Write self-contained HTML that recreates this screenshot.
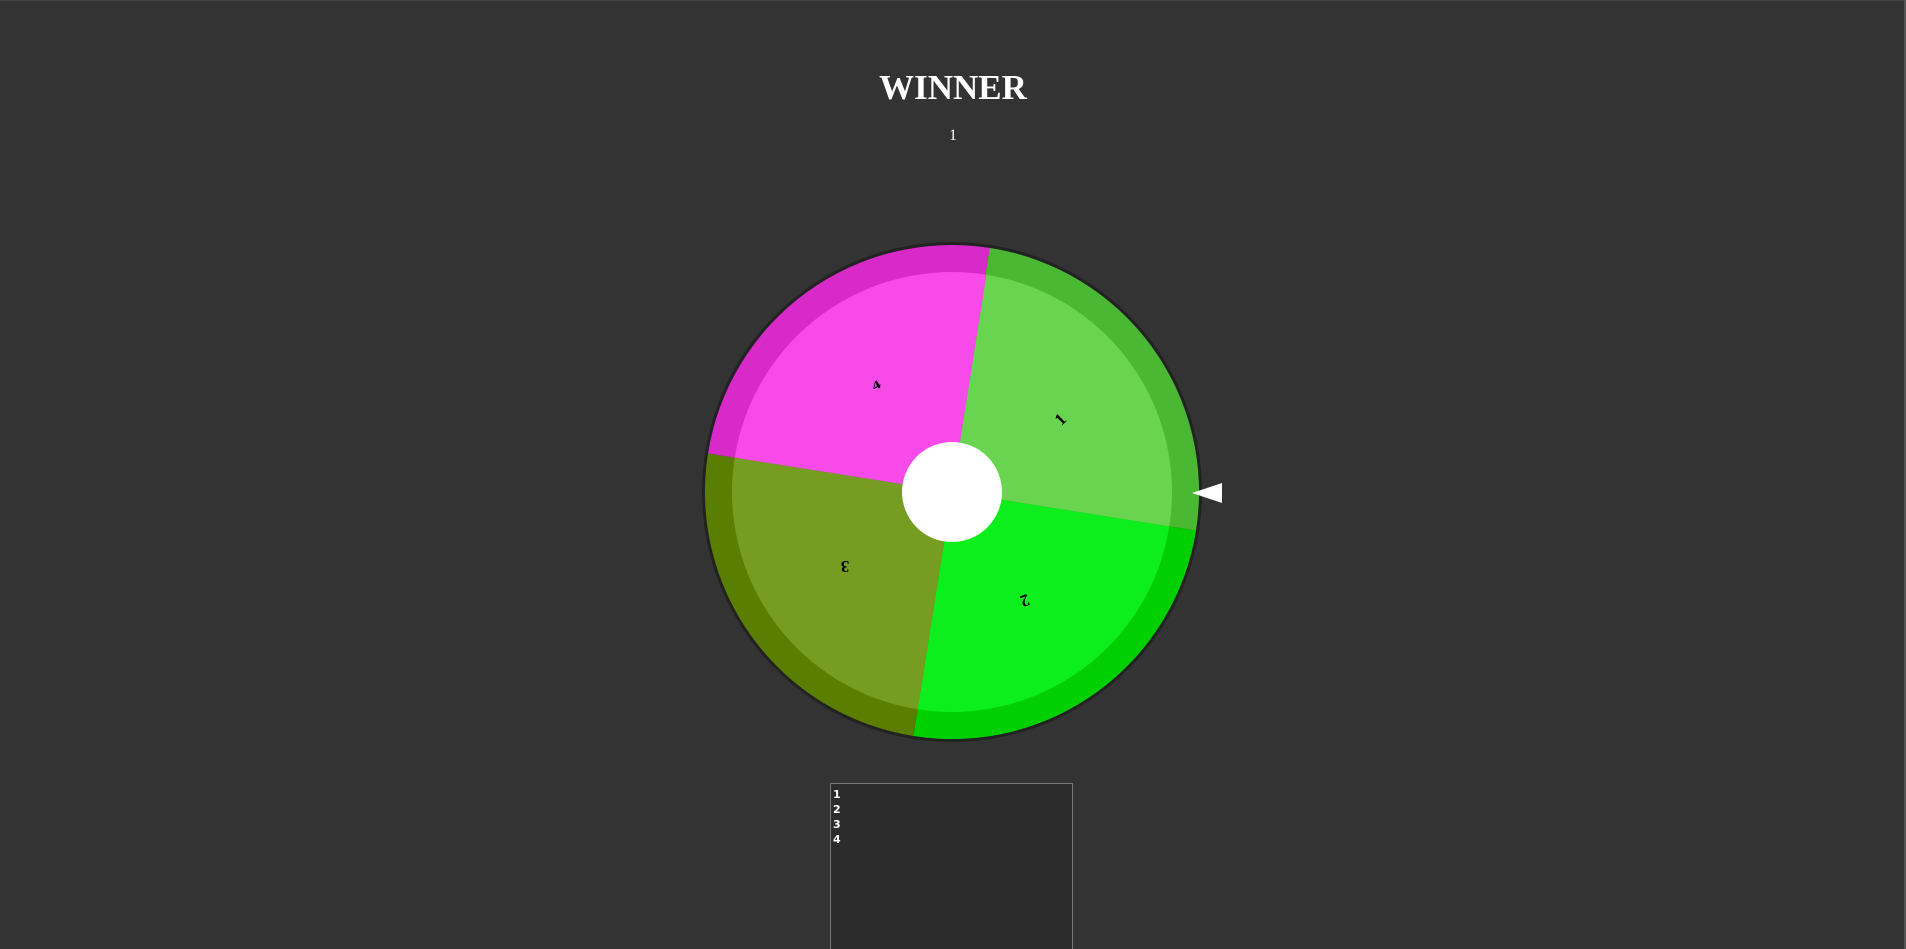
<!DOCTYPE html>
<html><head><meta charset="utf-8"><style>
html,body{margin:0;padding:0;width:1906px;height:949px;overflow:hidden;background:#333;}
body{position:relative;font-family:"Liberation Serif",serif;}
.top{position:absolute;left:0;top:0;width:1906px;height:1px;background:#444;}
.sb{position:absolute;left:1904px;top:0;width:2px;height:949px;background:#555;}
h1{position:absolute;left:0;width:1906px;top:70px;margin:0;text-align:center;color:#fff;font-size:35px;font-weight:bold;line-height:36px;}
.w{position:absolute;left:0;width:1906px;top:127px;text-align:center;color:#fff;font-size:16px;}
.ta{position:absolute;left:830px;top:783px;width:243px;height:180px;border:1px solid #777;background:#2c2c2c;box-sizing:border-box;padding:3px 2px;color:#fff;font:bold 11px/15px "DejaVu Sans",sans-serif;}
</style></head><body>
<div class="top"></div><div class="sb"></div>
<h1>WINNER</h1>
<div class="w">1</div>
<svg width="1906" height="949" style="position:absolute;left:0;top:0">
<g transform="translate(952,492)">
<circle r="250" fill="#222"/>
<path d="M0 0 L37.6 -244.1 A247 247 0 0 1 244 38.6 Z" fill="#4ab832"/>
<path d="M0 0 L244 38.6 A247 247 0 0 1 -38.6 244 Z" fill="#00d000"/>
<path d="M0 0 L-38.6 244 A247 247 0 0 1 -244 -38.6 Z" fill="#5a7e00"/>
<path d="M0 0 L-244 -38.6 A247 247 0 0 1 37.6 -244.1 Z" fill="#d82ac8"/>
<path d="M0 0 L34.4 -217.3 A220 220 0 0 1 217.3 34.4 Z" fill="#68d450"/>
<path d="M0 0 L217.3 34.4 A220 220 0 0 1 -34.4 217.3 Z" fill="#0def1d"/>
<path d="M0 0 L-34.4 217.3 A220 220 0 0 1 -217.3 -34.4 Z" fill="#769c22"/>
<path d="M0 0 L-217.3 -34.4 A220 220 0 0 1 34.4 -217.3 Z" fill="#f84ae8"/>
<g font-family="Liberation Serif,serif" font-weight="bold" font-size="17" fill="#000" text-anchor="middle">
<text transform="translate(108,-73) rotate(-45)" dy="6">1</text>
<text transform="translate(73,109) rotate(160)" dy="6">2</text>
<text transform="translate(-107,75) rotate(180)" dy="6">3</text>
<text transform="translate(-76,-107) rotate(-30) scale(1,0.7)" dy="6">4</text>
</g>
<circle r="50" fill="#fff"/>
</g>
<polygon points="1192,493 1222,483 1222,503" fill="#fff"/>
</svg>
<div class="ta">1<br>2<br>3<br>4</div>
</body></html>
